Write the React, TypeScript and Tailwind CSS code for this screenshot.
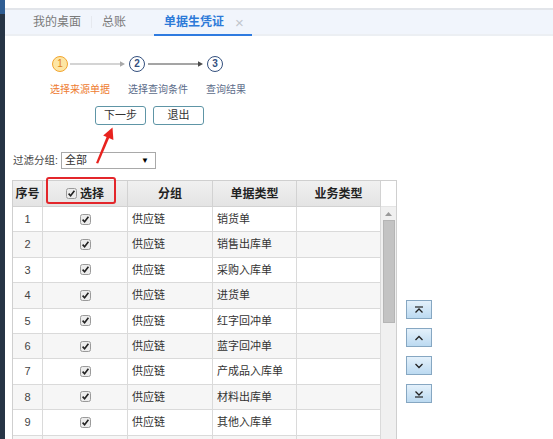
import React from 'react';

const rows = [
    { no: 1, group: '供应链', type: '销货单' },
    { no: 2, group: '供应链', type: '销售出库单' },
    { no: 3, group: '供应链', type: '采购入库单' },
    { no: 4, group: '供应链', type: '进货单' },
    { no: 5, group: '供应链', type: '红字回冲单' },
    { no: 6, group: '供应链', type: '蓝字回冲单' },
    { no: 7, group: '供应链', type: '产成品入库单' },
    { no: 8, group: '供应链', type: '材料出库单' },
    { no: 9, group: '供应链', type: '其他入库单' },
];

function Check() {
    return (
        <svg width="11" height="11" viewBox="0 0 11 11" className="shrink-0">
            <rect x="0.5" y="0.5" width="10" height="10" rx="2" fill="#ececec" stroke="#9a9a9a" />
            <path d="M2.6 5.6 L4.6 7.8 L8.4 2.8" fill="none" stroke="#222" strokeWidth="1.6" />
        </svg>
    );
}

function StepCircle({ n, active }: { n: number; active?: boolean }) {
    return (
        <div
            className={
                active
                    ? 'w-4 h-4 rounded-full border-[1.5px] border-[#f2a530] bg-[#fde6a4] text-[#e2821c] text-[10px] flex items-center justify-center leading-none'
                    : 'w-4 h-4 rounded-full border-[1.5px] border-[#34507e] bg-white text-[#34507e] text-[10px] font-bold flex items-center justify-center leading-none'
            }
        >
            {n}
        </div>
    );
}

function StepLine({ color }: { color: string }) {
    return (
        <svg width="56" height="8" viewBox="0 0 56 8" className="shrink-0">
            <line x1="0" y1="4" x2="52" y2="4" stroke={color} strokeWidth="1" />
            <path d="M50 1.2 L55 4 L50 6.8 Z" fill={color} />
        </svg>
    );
}

function MoveButton({ kind }: { kind: 'top' | 'up' | 'down' | 'bottom' }) {
    return (
        <div className="w-[26px] h-[19px] border border-[#86a7c2] bg-gradient-to-b from-[#e4f1fb] to-[#bcdaf1] flex items-center justify-center">
            <svg width="10" height="8" viewBox="0 0 10 8">
                {kind === 'top' && (
                    <>
                        <line x1="1" y1="1" x2="9" y2="1" stroke="#222" strokeWidth="1.2" />
                        <path d="M1.5 6.5 L5 3 L8.5 6.5" fill="none" stroke="#222" strokeWidth="1.3" />
                    </>
                )}
                {kind === 'up' && <path d="M1.5 6 L5 2.5 L8.5 6" fill="none" stroke="#222" strokeWidth="1.3" />}
                {kind === 'down' && <path d="M1.5 2 L5 5.5 L8.5 2" fill="none" stroke="#222" strokeWidth="1.3" />}
                {kind === 'bottom' && (
                    <>
                        <path d="M1.5 1.5 L5 5 L8.5 1.5" fill="none" stroke="#222" strokeWidth="1.3" />
                        <line x1="1" y1="7" x2="9" y2="7" stroke="#222" strokeWidth="1.2" />
                    </>
                )}
            </svg>
        </div>
    );
}

export default function App() {
    return (
        <div className="relative w-[553px] h-[439px] overflow-hidden bg-white flex font-['Liberation_Sans','Noto_Sans_CJK_SC',sans-serif] text-[12px] text-[#333]">
            {/* left nav edge */}
            <div className="w-[5px] shrink-0 flex flex-col">
                <div className="h-[14px] bg-[#2f5d93]" />
                <div className="flex-1 bg-[#263445]" />
            </div>

            <div className="flex-1 min-w-0">
                <div className="h-[8px] bg-white" />

                {/* tabs */}
                <div className="h-[28px] border-t-2 border-b-2 border-t-[#e2e5ea] border-b-[#eceff3] bg-[#f1f5fc] flex items-stretch pl-[28px] text-[12px]">
                    <div className="flex items-center text-[#7a7a7a] pr-[10px]">我的桌面</div>
                    <div className="my-[6px] w-px bg-[#e6e9ef]" />
                    <div className="flex items-center text-[#7a7a7a] pl-[10px] w-[62px]">总账</div>
                    <div className="flex items-center w-[98px] pl-[10px] border-b-2 border-[#2f7be0] -mb-[2px]">
                        <span className="font-bold text-[#2d7ad8] text-[12px]">单据生凭证</span>
                        <span className="ml-[11px] text-[#c2c6cc] text-[15px] leading-none">×</span>
                    </div>
                </div>

                {/* steps */}
                <div className="mt-[20px] ml-[47px] flex items-center gap-[2px]">
                    <StepCircle n={1} active />
                    <StepLine color="#a9a9a9" />
                    <div className="ml-[1px]">
                        <StepCircle n={2} />
                    </div>
                    <div className="ml-[1px]">
                        <StepLine color="#4b4b4b" />
                    </div>
                    <div className="ml-[1px]">
                        <StepCircle n={3} />
                    </div>
                </div>
                <div className="mt-[11px] ml-[45px] flex text-[10px] leading-[13px]">
                    <div className="w-[78px] text-[#ee7b30]">选择来源单据</div>
                    <div className="w-[78px] text-[#5c6c8a]">选择查询条件</div>
                    <div className="text-[#5c6c8a]">查询结果</div>
                </div>

                {/* actions */}
                <div className="mt-[10px] ml-[90px] flex gap-[7px]">
                    <div className="w-[51px] h-[19px] rounded-[3px] border border-[#5e95a6] bg-white flex items-center justify-center text-[11px] text-[#333]">下一步</div>
                    <div className="w-[51px] h-[19px] rounded-[3px] border border-[#5e95a6] bg-white flex items-center justify-center text-[11px] text-[#333]">退出</div>
                </div>

                {/* filter */}
                <div className="mt-[27px] ml-[8px] flex items-center h-[17px]">
                    <span className="text-[10.5px] text-[#444]">过滤分组:</span>
                    <div className="ml-[3px] w-[95px] h-[17px] border border-[#a9a9a9] flex items-center justify-between pl-[3px] pr-[6px] text-[11px]">
                        <span>全部</span>
                        <span className="text-[8px] text-black">▼</span>
                    </div>
                </div>

                {/* table area */}
                <div className="mt-[11px] ml-[7px] flex items-start">
                    <div className="relative flex">
                        <div className="w-[369px] border border-[#cfcfcf] border-r-0 text-[11px]">
                            <div className="flex h-[26px] bg-gradient-to-b from-[#f0f0f0] to-[#e4e4e4] font-bold text-[#222] text-[12px] border-b border-[#d2d2d2]">
                                <div className="w-[30px] flex items-center justify-center border-r border-[#d2d2d2]">序号</div>
                                <div className="w-[85px] flex items-center justify-center gap-[3px] border-r border-[#d2d2d2]">
                                    <Check />
                                    <span>选择</span>
                                </div>
                                <div className="w-[85px] flex items-center justify-center border-r border-[#d2d2d2]">分组</div>
                                <div className="w-[84px] flex items-center justify-center border-r border-[#d2d2d2]">单据类型</div>
                                <div className="flex-1 flex items-center justify-center border-r border-[#d2d2d2]">业务类型</div>
                            </div>
                            {rows.map((r) => (
                                <div
                                    key={r.no}
                                    className={`flex h-[25.4px] border-b border-[#dadada] ${r.no % 2 === 0 ? 'bg-[#f6f6f6]' : 'bg-white'}`}
                                >
                                    <div className="w-[30px] flex items-center justify-center border-r border-[#dadada] text-[#444]">{r.no}</div>
                                    <div className="w-[85px] flex items-center justify-center border-r border-[#dadada]">
                                        <Check />
                                    </div>
                                    <div className="w-[85px] flex items-center pl-[4px] border-r border-[#dadada]">{r.group}</div>
                                    <div className="w-[84px] flex items-center pl-[4px] border-r border-[#dadada]">{r.type}</div>
                                    <div className="flex-1 border-r border-[#dadada]" />
                                </div>
                            ))}
                            {/* next row, cut by the window edge */}
                            <div className="flex h-[25.4px] bg-[#f6f6f6]">
                                <div className="w-[30px] border-r border-[#dadada]" />
                                <div className="w-[85px] border-r border-[#dadada]" />
                                <div className="w-[85px] border-r border-[#dadada]" />
                                <div className="w-[84px] border-r border-[#dadada]" />
                                <div className="flex-1 border-r border-[#dadada]" />
                            </div>
                        </div>

                        {/* scrollbar */}
                        <div className="w-[16px] flex flex-col border border-l-0 border-[#cfcfcf]">
                            <div className="h-[26px] bg-white border-b border-[#e4e4e4]" />
                            <div className="flex-1 bg-[#f0f0f0] flex flex-col items-center pt-[5px]">
                                <svg width="7" height="4" viewBox="0 0 7 4">
                                    <path d="M0 4 L3.5 0 L7 4 Z" fill="#9a9a9a" />
                                </svg>
                                <div className="mt-[4px] w-[12px] h-[103px] bg-[#c3c3c3] border border-[#b5b5b5]" />
                            </div>
                        </div>

                        {/* highlight */}
                        <div className="absolute left-[34px] -top-[3px] w-[70px] h-[27px] border-2 border-[#e3262b] rounded-[3px]" />
                    </div>

                    <div className="ml-[9px] mt-[120px] flex flex-col gap-[9px]">
                        <MoveButton kind="top" />
                        <MoveButton kind="up" />
                        <MoveButton kind="down" />
                        <MoveButton kind="bottom" />
                    </div>
                </div>
            </div>

            {/* annotation arrow */}
            <svg className="absolute left-0 top-0 pointer-events-none" width="553" height="439" viewBox="0 0 553 439">
                <path d="M96 163 L98.2 163.6 L109.6 137 L107 136 Z" fill="#e8231f" />
                <path d="M112.5 127.5 L113.4 140 L103.2 135.6 Z" fill="#e8231f" />
            </svg>
        </div>
    );
}
